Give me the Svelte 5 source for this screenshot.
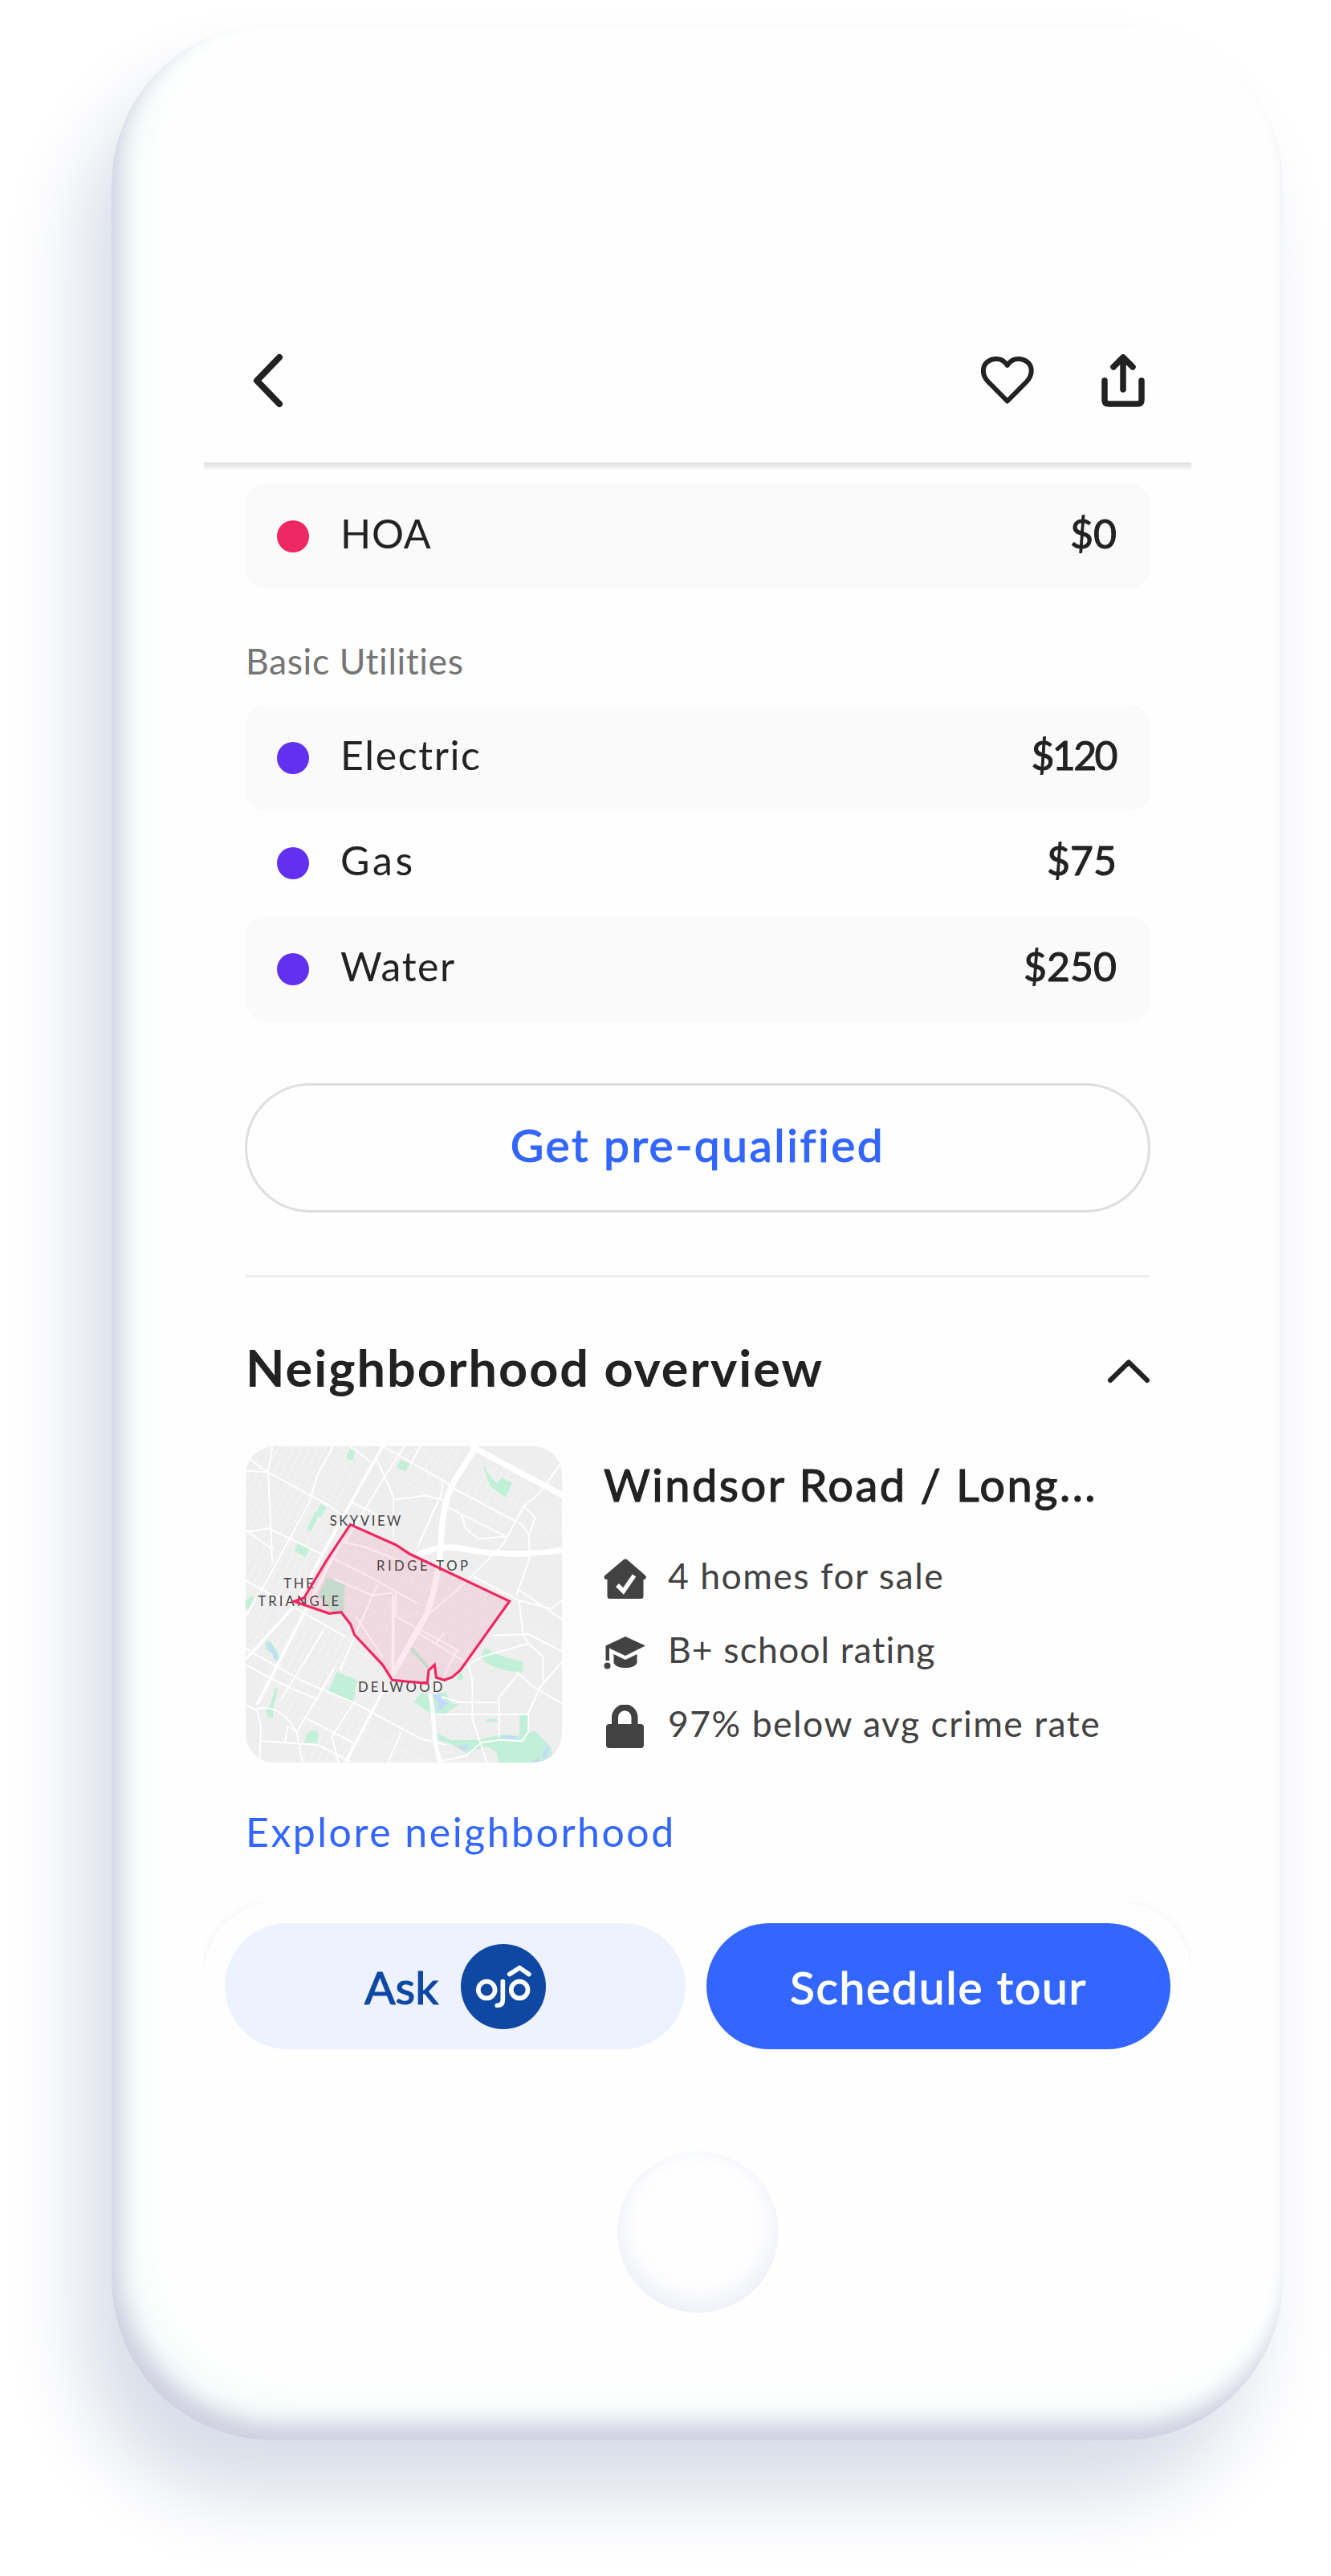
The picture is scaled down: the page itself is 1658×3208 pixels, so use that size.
<script>
  const fees = [{ name: 'HOA', cost: '$0', color: '#ef2763' }];
  const utilities = [
    { name: 'Electric', cost: '$120', color: '#6231ef' },
    { name: 'Gas', cost: '$75', color: '#6231ef' },
    { name: 'Water', cost: '$250', color: '#6231ef' }
  ];
</script>

{#snippet costRow(item, striped)}
  <li class="row {item.name.toLowerCase()}" class:striped>
    <span class="dot" style="background: {item.color}"></span>
    <span class="name">{item.name}</span>
    <span class="cost">{item.cost}</span>
  </li>
{/snippet}

<div class="phone">
  <main class="screen">
    <header class="topbar">
      <svg class="back" viewBox="0 0 38 68" width="38" height="68"><path d="M33 5 5 34l28 29" /></svg>
      <div class="actions">
        <svg viewBox="0 0 66 68" width="66" height="68"><path class="thin" d="M32.8 59.5 9 35.5C.5 26.500 1.500 16 8 10.700c7-5.700 17-4.500 22 .8l2.800 3.500 2.800-3.500c5-5.300 15-6.500 22-.8 6.500 5.300 7.500 15.800-1 24.800z" /></svg>
        <svg viewBox="0 0 56 68" width="56" height="68"><path d="M5 34v24q0 5 5 5h36q5 0 5-5V34M28 45V6M16 17 28 5l12 12" /></svg>
      </div>
    </header>
    <div class="edge"></div>

    <div class="content">
      <ul>
        {#each fees as item}{@render costRow(item, true)}{/each}
      </ul>
      <h3>Basic Utilities</h3>
      <ul>
        {#each utilities as item, i}{@render costRow(item, i % 2 === 0)}{/each}
      </ul>

      <button class="prequal">Get pre-qualified</button>
      <hr />

      <div class="section-head">
        <h2>Neighborhood overview</h2>
        <svg class="chevron" viewBox="0 0 54 32" width="54" height="32"><path d="M4 27 27 4.500 50 27" /></svg>
      </div>

      <section class="overview">
        <svg class="map" viewBox="48 63 1182 1182" width="394" height="394">
          <defs>
            <pattern id="blocks" width="26" height="64" patternUnits="userSpaceOnUse" patternTransform="rotate(28)">
              <path d="M0 0V64M0 0H26" fill="none" stroke="#f8f8f8" stroke-width="3.500" />
            </pattern>
            <pattern id="blocks-wide" width="34" height="52" patternUnits="userSpaceOnUse" patternTransform="rotate(27)">
              <path d="M0 0V52M0 0H34" fill="none" stroke="#f7f7f7" stroke-width="3.500" />
            </pattern>
          </defs>
          <rect x="48" y="63" width="1182" height="1182" fill="#eeeeee" />
          <path fill="url(#blocks)" d="M48 63H520L400 290 130 810 48 900zM560 80 860 70 780 250 620 240zM230 1100 450 760 590 930 430 1245H260z" />
          <path fill="url(#blocks)" d="M170 760 280 690 440 780 400 900 200 1100 90 1000zM830 230 1000 110 1150 240 1000 380zM760 1075H900L920 1160H770z" />
          <path fill="url(#blocks-wide)" d="M410 420 600 450 700 500 1030 640 850 880 600 900 450 760 410 640zM1060 700 1230 760V900L1100 760zM1110 280H1230V420L1110 400zM480 1080 740 1200V1245H450z" />

          <g fill="#c1efd8">
            <path d="m436 75 22 10-13 32-22-10zM628 113l32 15-14 31-34-17zM328 279l22 12-22 38-10-4-26 56-16-8 30-62 8-3zM242 426l45 18-15 32-41-20zM935 138l12 4 0 14 38 44 20-20 39 20-24 55-36-27-22-16z" />
            <path d="m48 640 26-18 6 6-20 40-12 4zM122 785l22 10 26 42 6 22-18 8-14-32-22-14zM390 907l74 30-14 82-95-38zM160 965l8 4-12 50-5 28-1 32-18-6-10-30 16-10z" />
            <path d="m296 1123 24 8-4 40-50 0 10-30zM945 816c30 24 80 38 141 53l-4 40c-70-6-130-24-158-58zM705 985l40 5 50-8 20 40 32 6-40 24-12 12-60-4-58-42zM948 1082h40v10h-40zM1072 1066h32v80l-32 12zM764 1135l50 25 100 0 90-20 60 6 66-20 60 66 6 28-40 25H995l-10-40-35-20-78 24-60-36-46-12zM840 905l18 8 2 26-22-4z" />
            <path d="m352 553 66 27-4 100-40 2-55-62zM668 810l66 76-6 10-70-76z" />
          </g>
          <path fill="#c5d8fd" d="m744 992 36-2 2 20 24 12-32 26-10-4 4-26zM130 798l14 6 24 42-6 18-10-12 2-14-18-14zM840 1186l42-10-14 24zM1002 1146l56 0 6 12-44-2zM1116 1242l30-14-4 14zM1176 1180l8 8-16 44-12-8z" />

          <g class="minor">
            <path d="M48 100 130 160M148 63 132 160 148 500M48 155 132 160 360 285 420 330M375 63 315 170 290 265 130 560 48 700M640 63 560 190 420 420M560 63 810 205M48 385 135 370 330 465M48 375 150 450M48 565 230 665 420 775M700 63 665 130M440 63 520 125M440 270 610 355M535 105 600 250 600 400" />
            <path d="M600 262 720 248 790 265M785 200 780 240 690 440M805 210 1080 355 1105 390 1110 480 1060 620M800 290 920 350 1020 400 920 410 870 370 855 320M1230 120 1150 235 1085 290 1010 430 850 590 720 700M1090 290 1130 330 1110 390M900 550 1070 640 1190 670 1230 640M1070 600 1230 710" />
            <path d="M1070 640 1085 770 1105 800 930 850 880 880 895 940 895 1080 950 1245M970 770 1105 765 1230 830M1105 800 1160 850V940M790 935 740 980M1230 870 1150 960 1105 1060V1130L1080 1165 1000 1160 930 1170 870 1220 780 1240M1060 905 1120 960 1230 1025M1070 910 995 1000V1150M760 1065H1105M780 1000 850 1020H990" />
            <path d="M48 820 260 940 450 1020 700 1155 800 1180M48 880 200 960 320 1010M380 890 240 1130 205 1110 195 1170M90 1045C150 1030 200 1060 240 1135L260 1245M48 1030 90 1050 105 1110 100 1245M110 1165 320 1180 440 1240M265 1075 450 1170M370 1145 395 1245M630 1130 580 1245M455 1015 370 1150M340 750 180 1010" />
            <path d="M400 420 480 435 620 490M370 480 500 545 690 650M540 580 400 900M600 610 520 620 380 560M610 610V700L850 830M690 760 870 870M790 760 760 800M840 820 790 920M460 700 560 850" />
          </g>
          <g class="medium">
            <path d="M560 63 410 330 230 660 48 860M415 400 280 660 90 1030M570 960 420 1245M600 620 598 930" />
            <path d="M735 985C760 1060 740 1140 775 1245" stroke-width="16" />
          </g>
          <g class="major">
            <path d="M910 63 830 190Q780 280 778 430 770 560 725 690L600 910" />
            <path d="m890 63 130 70 215 115" />
            <path d="M690 470Q780 425 880 450 1050 480 1230 450" />
          </g>

          <g class="place">
            <text x="362" y="359" textLength="266">SKYVIEW</text>
            <text x="537" y="528" textLength="342">RIDGE TOP</text>
            <text x="190" y="594" textLength="112">THE</text>
            <text x="94" y="660" textLength="302">TRIANGLE</text>
            <text x="468" y="982" textLength="316">DELWOOD</text>
          </g>
          <path d="M439 356 610 432 660 465 1034 642 850 900 820 926 790 937 760 927 754 880 732 900 727 949 596 937 560 880 455 768 440 728 405 683 360 688 228 643 266 630 350 490z" fill="#ef2763" fill-opacity=".1" stroke="#ef2763" stroke-width="9.500" />
        </svg>

        <div class="facts">
          <h4>Windsor Road / Long...</h4>
          <p class="homes">
            <svg viewBox="0 0 54 54" width="54" height="54"><path d="M24.500 3.500q2.500-2 5 0L52 23q1.500 1.500.5 3.500-1 2-3 1.500V49q0 3-3 3h-39q-3 0-3-3V28q-2.500.5-3.500-1.500-1-2 .5-3.500z" /><path class="check" d="m17 35 7.500 7.500L38 23" /></svg>
            <span>4 homes for sale</span>
          </p>
          <p class="school">
            <svg viewBox="0 0 54 54" width="54" height="54"><path d="M27 7 52 18.500 27 31 7 21.500V37H2.500V18.500z" /><path d="M12.500 29 27 36l14.500-7v11q-3 6-14.500 6t-14.500-6z" /><circle cx="4.500" cy="43.500" r="4" /></svg>
            <span>B+ school rating</span>
          </p>
          <p class="crime">
            <svg viewBox="0 0 54 54" width="54" height="54"><path d="M14 28V16a12 12.500 0 0 1 24.500 0V28" fill="none" stroke="#424242" stroke-width="8" /><rect x="3" y="24" width="47" height="30" rx="4" /></svg>
            <span>97% below avg crime rate</span>
          </p>
        </div>
      </section>

      <a class="explore" href="#neighborhood">Explore neighborhood</a>
    </div>

    <div class="dock">
      <div class="panel">
        <button class="ask">
          <span>Ask</span>
          <svg viewBox="405 34 316 316" width="106" height="106">
            <circle cx="563" cy="192" r="158" fill="#0f48a3" />
            <g fill="none" stroke="#fff" stroke-width="17" stroke-linecap="round" stroke-linejoin="round">
              <circle cx="501" cy="204" r="31" />
              <circle cx="623" cy="204" r="31" />
              <path d="M561 173v68q0 21-21 21M586 146l37-24 35 24" />
            </g>
          </svg>
        </button>
        <button class="tour">Schedule tour</button>
      </div>
    </div>
  </main>
  <div class="home"></div>
</div>

<style>
  :global(body) {
    background: #fff;
  }
  :global(#app) {
    display: flow-root;
    box-sizing: border-box;
    height: 3208px;
    overflow: hidden;
  }
  .phone {
    box-sizing: border-box;
    width: 1459px;
    height: 3009px;
    margin: 30px 0 0 139px;
    padding: 342px 114px 0 115px;
    border-radius: 200px;
    background: #fefefe;
    box-shadow:
      -37px 70px 98px #d8dde8,
      inset 10px -20px 26px #cfcfe0,
      inset 28px -38px 46px #effaf8;
    font-family: Lato, 'Open Sans', sans-serif;
    color: #222;
  }
  ul, h2, h3, h4, p {
    margin: 0;
    padding: 0;
    font-weight: 400;
  }
  button {
    box-sizing: border-box;
    border: 0;
    font: inherit;
    display: flex;
    align-items: center;
    justify-content: center;
  }
  svg {
    flex: none;
  }
  span, h2, h3, h4, a, button {
    white-space: nowrap;
  }
  .topbar {
    display: flex;
    align-items: center;
    justify-content: space-between;
    height: 204px;
    padding: 0 57px 0 61px;
  }
  .actions {
    display: flex;
    gap: 83px;
  }
  .topbar path, .chevron path {
    fill: none;
    stroke: #222;
    stroke-width: 7.5;
    stroke-linecap: round;
    stroke-linejoin: round;
  }
  .topbar .thin {
    stroke-width: 6;
  }
  .topbar .back path {
    stroke-width: 8;
  }
  .edge {
    height: 10px;
    background: linear-gradient(#dfdfdf, #e9e9e9 40%, #fefefe);
  }
  .content {
    padding: 16px 52px 58px;
  }
  .row {
    box-sizing: border-box;
    display: flex;
    align-items: center;
    height: 131.3px;
    padding: 0 41px 0 39px;
    border-radius: 24px;
    font-size: 50px;
  }
  .striped {
    background: #fafafa;
  }
  .dot {
    width: 40px;
    height: 40px;
    border-radius: 50%;
  }
  .name {
    margin-left: 39px;
    padding-bottom: 8px;
    letter-spacing: 1.6px;
  }
  .hoa .name {
    letter-spacing: 0.8px;
  }
  .gas .name {
    letter-spacing: 3.6px;
  }
  .cost {
    margin-left: auto;
    padding-bottom: 8px;
    -webkit-text-stroke: 1px;
  }
  .electric .cost {
    letter-spacing: -2.6px;
    padding-right: 1px;
  }
  h3 {
    box-sizing: border-box;
    height: 145px;
    padding-top: 63px;
    font-size: 44.5px;
    line-height: 54px;
    letter-spacing: 0.6px;
    color: #757575;
  }
  .prequal {
    width: 1128px;
    height: 161px;
    margin: 77px 0 0 -1px;
    padding-bottom: 10px;
    border: 3.5px solid #dedede;
    border-radius: 81px;
    background: transparent;
    color: #36f;
    font-size: 57px;
    letter-spacing: 2.5px;
    -webkit-text-stroke: 1.2px;
  }
  hr {
    height: 3px;
    margin: 78px 0 0;
    border: 0;
    background: #eee;
  }
  .section-head {
    box-sizing: border-box;
    display: flex;
    align-items: center;
    justify-content: space-between;
    height: 210px;
  }
  h2 {
    padding-top: 12px;
    font-size: 63px;
    font-weight: 700;
    letter-spacing: 2px;
  }
  .chevron {
    margin: 24px -1px 0 0;
  }
  .chevron path {
    stroke-width: 6;
  }
  .overview {
    display: flex;
    gap: 52px;
  }
  .map {
    border-radius: 36px;
  }
  .minor, .medium, .major {
    fill: none;
    stroke: #fff;
    stroke-width: 6;
    stroke-linejoin: round;
  }
  .medium {
    stroke-width: 11;
  }
  .major {
    stroke-width: 22;
  }
  .place {
    fill: #444;
    font-size: 50px;
  }
  h4 {
    margin: 14px 0 32px;
    font-size: 56px;
    line-height: 68px;
    letter-spacing: 2.5px;
    -webkit-text-stroke: 1.2px;
  }
  .facts p {
    display: flex;
    align-items: center;
    gap: 26px;
    height: 92px;
    font-size: 44.5px;
    letter-spacing: 1.5px;
    color: #424242;
  }
  .facts .school {
    letter-spacing: 1.1px;
  }
  .facts svg {
    margin-top: 10px;
    fill: #424242;
  }
  .facts .check {
    fill: none;
    stroke: #fff;
    stroke-width: 5.5;
  }
  .explore {
    display: block;
    margin-top: 56px;
    font-size: 50px;
    line-height: 60px;
    letter-spacing: 2.5px;
    color: #36f;
    text-decoration: none;
  }
  .dock {
    overflow: hidden;
  }
  .panel {
    display: flex;
    gap: 26px;
    padding: 26px 26px 0;
    border-radius: 90px 90px 0 0;
    box-shadow: 0 0 14px rgba(0, 0, 0, 0.05);
  }
  .panel button {
    height: 157px;
    border-radius: 79px;
    font-size: 57px;
    -webkit-text-stroke: 1.2px;
  }
  .ask {
    width: 574px;
    gap: 28px;
    background: #eef2ff;
    color: #0f48a3;
  }
  .tour {
    width: 578px;
    background: #36f;
    color: #fff;
    letter-spacing: 1.8px;
  }
  .home {
    width: 201px;
    height: 201px;
    margin: 127px auto 0;
    border-radius: 50%;
    box-shadow: inset 0 -10px 34px #e9ecf5;
  }
</style>
